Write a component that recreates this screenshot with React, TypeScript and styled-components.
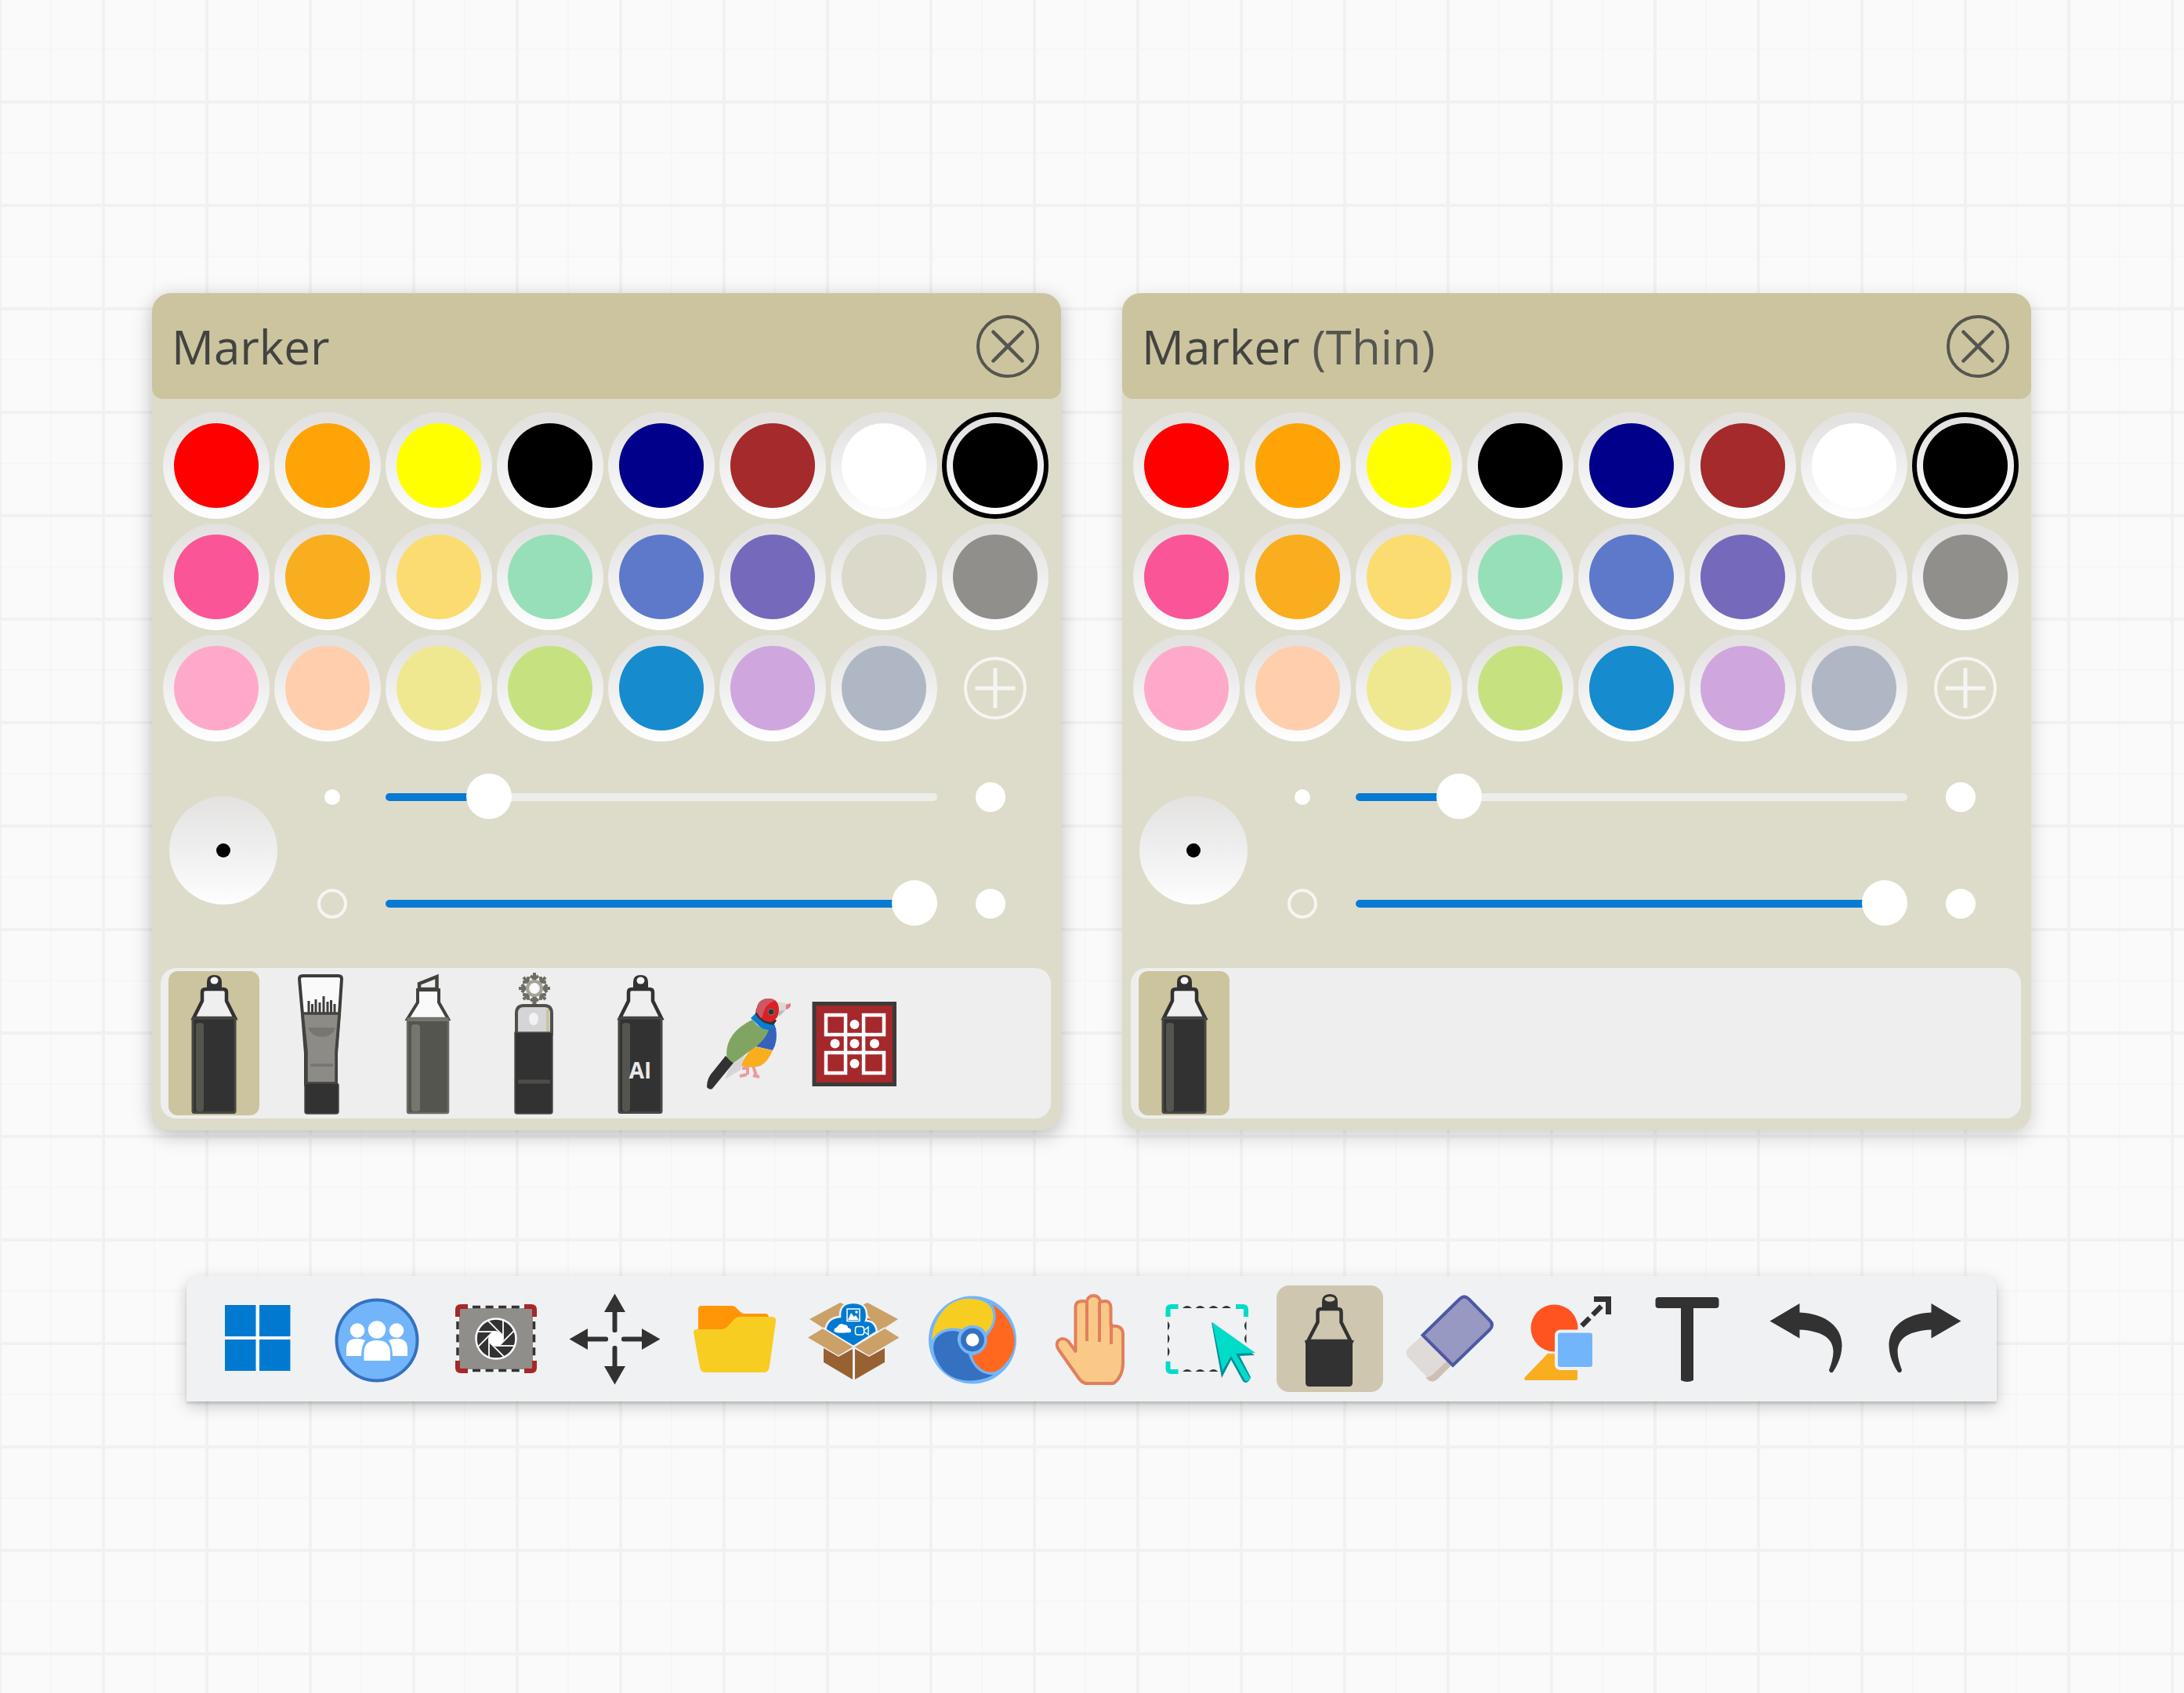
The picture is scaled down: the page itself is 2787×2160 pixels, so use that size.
import React, { useId, useState } from "react";
import styled, { createGlobalStyle } from "styled-components";

const ink = "#323232";
const sand = "#cbc49f";

const GlobalStyle = createGlobalStyle`
  * { box-sizing: border-box; }
  body {
    margin: 0;
    background-color: #fafafa;
    font-family: "Open Sans", "Noto Sans", sans-serif;
  }
`;

const Board = styled.main`
  min-height: 100vh;
  display: flex;
  flex-direction: column;
  align-items: center;
  gap: 186px;
  padding: 374px 195px 80px 194px;
  background-color: #fafafa;
  background-image:
    linear-gradient(90deg, #f2f1f0 4px, transparent 4px),
    linear-gradient(#f1f1f1 4px, transparent 4px),
    linear-gradient(90deg, #f6f6f6 2px, transparent 2px),
    linear-gradient(#f6f6f6 2px, transparent 2px);
  background-size: 132px 132px;
  background-position: -2px 0, 0 -4px, 64px 0, 0 62px;
`;

const Panels = styled.div`
  align-self: stretch;
  display: flex;
  gap: 78px;
`;

const Panel = styled.section<{ $soft?: boolean }>`
  flex: 1;
  min-width: 0;
  border-radius: 24px;
  background: #dddcca;
  box-shadow: ${(p) =>
    p.$soft ? "0 8px 24px rgba(0, 0, 0, 0.17)" : "0 6px 24px rgba(0, 0, 0, 0.26)"};
`;

const PanelHeader = styled.header`
  height: 135px;
  padding: 0 28px 0 25px;
  display: flex;
  align-items: center;
  justify-content: space-between;
  border-radius: 24px 24px 14px 14px;
  background: ${sand};
`;

const PanelTitle = styled.h2`
  margin: 0;
  font-size: 60px;
  line-height: 80px;
  font-weight: 500;
  color: #434340;
`;

const Variant = styled.span`
  color: #555550;
`;

const RoundButton = styled.button`
  width: 80px;
  height: 80px;
  padding: 0;
  border: 0;
  background: none;
  svg { display: block; }
`;

const Palette = styled.div`
  display: grid;
  grid-template-columns: repeat(8, 136px);
  justify-content: space-between;
  align-items: center;
  justify-items: center;
  row-gap: 6px;
  padding: 17px 16px 0 14px;
`;

const Swatch = styled.input<{ $color: string }>`
  appearance: none;
  width: 136px;
  height: 136px;
  margin: 0;
  border: 14px solid transparent;
  border-radius: 50%;
  background:
    linear-gradient(${(p) => p.$color}, ${(p) => p.$color}) padding-box,
    linear-gradient(#e3e2e1 10%, #efefef 50%, #fdfdfd 95%) border-box;
  &:checked {
    outline: 6px solid #000;
    outline-offset: -6px;
  }
`;

const StrokeSettings = styled.div`
  display: flex;
  align-items: center;
  gap: 50px;
  padding: 3px 70px 0 22px;
`;

const Preview = styled.div`
  flex: none;
  width: 138px;
  height: 138px;
  display: grid;
  place-items: center;
  border-radius: 50%;
  background: linear-gradient(#e3e2e1, #efefef 50%, #fefefe);
`;

const PreviewDot = styled.span`
  width: 18px;
  height: 18px;
  border-radius: 50%;
  background: #000;
`;

const Sliders = styled.div`
  flex: 1;
  min-width: 0;
`;

const SliderRow = styled.div`
  height: 136px;
  display: grid;
  grid-template-columns: 40px 1fr 40px;
  column-gap: 48px;
  align-items: center;
  justify-items: center;
`;

const Dot = styled.span<{ $size: number; $hollow?: boolean }>`
  width: ${(p) => p.$size}px;
  height: ${(p) => p.$size}px;
  border-radius: 50%;
  border: 4px solid ${(p) => (p.$hollow ? "#f6f5f2" : "#fff")};
  background: ${(p) => (p.$hollow ? "transparent" : "#fff")};
`;

const Range = styled.input`
  appearance: none;
  width: 100%;
  height: 58px;
  margin: 0;
  background: none;
  &::-webkit-slider-runnable-track {
    height: 10px;
    border-radius: 5px;
    background: linear-gradient(90deg, #067bd4 var(--fill), #ededea var(--fill));
  }
  &::-webkit-slider-thumb {
    appearance: none;
    width: 58px;
    height: 58px;
    margin-top: -25px;
    border-radius: 50%;
    background: #fff;
  }
`;

const Tray = styled.div`
  height: 192px;
  margin: 14px 13px 0 11px;
  padding: 4px 10px;
  display: flex;
  gap: 20px;
  border-radius: 20px;
  background: #eeeeee;
`;

const PanelFoot = styled.div`
  height: 15px;
`;

const Pen = styled.button<{ $active?: boolean }>`
  width: 116px;
  height: 184px;
  padding: 0;
  border: 0;
  border-radius: 12px;
  background: ${(p) => (p.$active ? sand : "transparent")};
  svg { display: block; }
`;

const Toolbar = styled.nav`
  display: flex;
  gap: 16px;
  padding: 12px 23px;
  border-radius: 16px 16px 0 0;
  background: #eff1f3;
  box-shadow: 0 3px 3px rgba(0, 0, 0, 0.12), 0 6px 20px rgba(0, 0, 0, 0.2);
`;

const Tool = styled.button<{ $active?: boolean }>`
  width: 136px;
  height: 136px;
  padding: 0;
  border: 0;
  border-radius: 16px;
  background: ${(p) => (p.$active ? "#cfc6b0" : "transparent")};
  svg { display: block; }
`;

/* ---------- pens ---------- */

const PenArt = ({ children }: { children: React.ReactNode }) => (
  <svg width="116" height="184" viewBox="0 0 116 184" aria-hidden="true">{children}</svg>
);

const MarkerPen = ({ label }: { label?: string }) => (
  <PenArt>
    <path d="M43 38V27q0-4 4-4h23q4 0 4 4v11l11 22H32z" fill="#efefef" stroke={ink} strokeWidth="4.5" />
    <path d="M49 24v-10q0-9 9.5-9t9.5 9v10z" fill={ink} />
    <ellipse cx="58.500" cy="12" rx="5" ry="4.5" fill="#f4f4f4" />
    <rect x="31" y="60" width="54" height="120.5" rx="2" fill={ink} stroke="#474743" strokeWidth="3" />
    <rect x="35" y="66" width="10" height="113" rx="4" fill="#555550" />
    {label && (
      <text x="58" y="137" textAnchor="middle" fontSize="28" fontWeight="700" fontFamily='"Open Sans", sans-serif' fill="#e8e8e8">
        {label}
      </text>
    )}
  </PenArt>
);

const BrushPen = () => (
  <PenArt>
    <path d="M31 10q0-4 4-4h46q4 0 4 4l-3 45-4 50v40H39v-40l-4-50z" fill="#fafafa" stroke="#3c3c3a" strokeWidth="4" />
    <path d="M35 54h47l-4 48v41H40v-41z" fill="#8c8b86" stroke="#434340" strokeWidth="3.5" />
    <path d="M43 54V38M47.5 54V42M52 54V36M57 54V40M62 54V32M67 54V39M71.5 54V37M76 54V42" stroke="#3f3f3c" strokeWidth="3" />
    <path d="M42 72h35q-3 11-17 12-14-1-18-12z" fill="#777670" />
    <path d="M45 120h29" stroke="#777670" strokeWidth="4" />
    <rect x="38" y="143" width="43" height="39" rx="3" fill={ink} stroke="#4a4a47" strokeWidth="1.5" />
  </PenArt>
);

const HighlighterPen = () => (
  <PenArt>
    <path d="M46 40V24h27v16l12 21H33z" fill="#fafafa" stroke="#41413e" strokeWidth="4" />
    <path d="M48 23v-7L70.5 7v16z" fill="#efefef" stroke="#41413e" strokeWidth="4.5" />
    <rect x="33" y="60" width="52" height="121" rx="2" fill="#54554e" stroke="#6a6b64" strokeWidth="2.5" />
    <rect x="38" y="68" width="11" height="111" rx="4" fill="#75766e" />
    <path d="M34 62h50" stroke="#75766e" strokeWidth="4" />
  </PenArt>
);

const SprayPen = () => (
  <PenArt>
    <path d="M59 34v9" stroke="#a3a295" strokeWidth="6" />
    <g stroke="#6d6d65" strokeWidth="4" fill="none">
      {[0, 45, 90, 135, 180, 225, 270, 315].map((a) => (
        <path key={a} d="M59 14V2M54 6l5 4 5-4" transform={`rotate(${a} 59 22)`} />
      ))}
      <circle cx="59" cy="22" r="9" stroke="#a3a295" />
    </g>
    <ellipse cx="59" cy="22" rx="5" ry="6.5" fill="#fafafa" />
    <path d="M36 80V54q0-10 9-10h27q9 0 9 10v26z" fill="#d5d5d8" stroke="#50504b" strokeWidth="4" />
    <path d="M76 49v30" stroke={sand} strokeWidth="4" />
    <ellipse cx="58" cy="61" rx="6" ry="8" fill="#f2f2f2" />
    <path d="M34 78h48v101q0 3-3 3H37q-3 0-3-3z" fill={ink} stroke="#50504b" strokeWidth="1.5" />
    <path d="M38 141h41" stroke="#4d4d49" strokeWidth="5" />
  </PenArt>
);

const BirdStamp = () => (
  <PenArt>
    <path d="M38 117l18-12-6 21-20 12z" fill="#d6d6d9" />
    <path d="M31 108l10 9-27 33q-4 2-7-2 0-12 8-20z" fill={ink} />
    <path d="M52 124h7v8M66 121l4 12M49 134l9-2M66 133l8 2" stroke="#e89ca2" strokeWidth="4" fill="none" />
    <path d="M63 60l6-6 25 15 1 10-14-2z" fill="#0c7bd4" />
    <path d="M85 74l10-2q3 18-4 29l-22-5z" fill="#3562bb" />
    <path d="M67 96l24 5q-6 15-16 20-12 3-24 0 3-12 16-25z" fill="#f9ae20" />
    <path d="M65 62q10 13 21 13-4 12-16 21l-29 21q-8-4-9-11 0-28 33-44z" fill="#80a563" />
    <path d="M70 48l7 0 19 15-4 6q-16-2-23-14z" fill={ink} />
    <path d="M97 39l17 3q0 6-6 7l-9 9z" fill="#dcd9d2" />
    <path d="M108 43l6-2q1 6-6 8z" fill="#e4778a" />
    <path d="M99 58l8-8-8 1z" fill="#adbdcd" />
    <path d="M70 52q1-17 16-17 13 0 13 15 0 11-10 15-12 0-19-13z" fill="#dc1f26" />
    <path d="M70 52q1-17 16-17 5 0 8 3-13 3-16 20l-2 2z" fill="#cd5762" />
    <circle cx="89" cy="52" r="4" fill="#333" stroke="#777" />
  </PenArt>
);

const PatternStamp = () => (
  <PenArt>
    <rect x="8" y="41.5" width="102.500" height="103" fill="#a5282b" stroke="#3b3b39" strokeWidth="5" />
    <path d="M23 56h25v74H23v-26h74v26H71V56h26v25H23z" fill="none" stroke="#fff" strokeWidth="4.500" />
    <g fill="#fff">
      <circle cx="59.5" cy="68" r="6" />
      <circle cx="59.5" cy="92.5" r="6" />
      <circle cx="59.5" cy="118" r="6" />
      <circle cx="34.5" cy="92.5" r="6" />
      <circle cx="85" cy="92.5" r="6" />
    </g>
  </PenArt>
);

/* ---------- toolbar icons ---------- */

const Art = ({ children }: { children: React.ReactNode }) => (
  <svg width="136" height="136" viewBox="0 0 136 136" aria-hidden="true">{children}</svg>
);

const WindowsIcon = () => (
  <Art>
    <rect x="26" y="25" width="84" height="84" fill="#fbfbfb" />
    <path d="M26 25h39.500v40H26zM70 25h39.500v40H70zM26 69h39.500v40H26zM70 69h39.500v40H70z" fill="#007ad1" />
  </Art>
);

const PeopleIcon = () => (
  <Art>
    <circle cx="68" cy="70" r="51.5" fill="#73b5fb" stroke="#3571c0" strokeWidth="4" />
    <g fill="#fff">
      <circle cx="43" cy="57.5" r="9.3" />
      <circle cx="93" cy="57.5" r="9.3" />
      <circle cx="68" cy="56.5" r="11.2" />
      <path d="M29 90V81q0-13 13-13 7 0 11 2-5 8-5 20z" />
      <path d="M107 90V81q0-13-13-13-7 0-11 2 5 8 5 20z" />
      <path d="M51.5 96V86q0-16 16.5-16t17 16v10z" />
    </g>
  </Art>
);

const CaptureIcon = () => (
  <Art>
    <rect x="21" y="29" width="94" height="78" fill="#8f8e8a" />
    <g stroke={ink} strokeWidth="3.5" fill="none">
      <path d="M38 27.5h62M38 108.5h62" strokeDasharray="10 6.6" />
      <path d="M19 46v44M116.5 46v44" strokeDasharray="10 6.6" />
    </g>
    <path
      d="M19 40v-9q0-4 4-4h9M104 27h9q4 0 4 4v9M117 96v9q0 4-4 4h-9M32 109h-9q-4 0-4-4v-9"
      fill="none" stroke="#a5282b" strokeWidth="6"
    />
    <circle cx="68" cy="68" r="25.5" fill={ink} stroke="#fff" strokeWidth="2.5" />
    <circle cx="68" cy="68" r="9.8" fill="#fff" />
    <g stroke="#fff" strokeWidth="1.8">
      {[0, 45, 90, 135, 180, 225, 270, 315].map((a) => (
        <path key={a} d="M45 59h24" transform={`rotate(${a} 68 68)`} />
      ))}
    </g>
  </Art>
);

const MoveIcon = () => (
  <Art>
    {[0, 90, 180, 270].map((a) => (
      <g key={a} transform={`rotate(${a} 67.5 68.5)`} fill={ink}>
        <path d="M67.500 10.500l13.500 23.500h-27z" />
        <rect x="64.5" y="30" width="6" height="30" rx="2.5" />
      </g>
    ))}
  </Art>
);

const FolderIcon = () => (
  <Art>
    <path d="M22 58V30q0-4 4-4h39q3 0 6 3l5 5q2 2 5 2h26q5 0 5 5v17z" fill="#ff9608" />
    <path d="M16 60q0-4 4-4h30q6 0 10-4l7-8q4-4 9-4h40q6 0 5 6l-8 57q-1 8-7 8H31q-6 0-7-7z" fill="#f7cd22" />
  </Art>
);

const BoxIcon = () => (
  <Art>
    <path d="M84 40l24 15-8 5-16-10z" fill="#976131" />
    <path d="M12 43l39-21 7 3-20 34-9-5zM125 43L86 22l-7 3 20 34 9-5z" fill="#cba168" />
    <path
      d="M68 78L32 58q2-17 19-18-1-18 17-18t17 18q0 3-1 5 12 0 14 14z"
      fill="#007ad1" stroke="#eff1f3" strokeWidth="2.5"
    />
    <g fill="none" stroke="#fff" strokeWidth="1.5">
      <rect x="60" y="30" width="16" height="15.5" />
      <rect x="70.5" y="52.5" width="11" height="10.5" rx="3" />
      <path d="M82 57l5-4v10l-5-4" />
    </g>
    <path d="M61 44l4-9 4 5 2-2 4 6z" fill="#fff" />
    <circle cx="72" cy="34" r="1.8" fill="#fff" />
    <path d="M46 60q-4-1-2-5 3-1 4-3 3-5 8-2 5 0 5 4 5 1 4 5-2 2-5 1-6 1-14 0z" fill="#fff" />
    <path d="M30 80l19 11 18-10v39L30 98zM108 80L88 91 70 81v39l38-22z" fill="#976131" />
    <path d="M10 66.500L29 55l39 23-19 11.500zM126.500 66.500L108 55 69 78l19 11.500z" fill="#cba168" />
    <path d="M29 54l39.500 24L108 54" fill="none" stroke="#eff1f3" strokeWidth="2" />
  </Art>
);

const SwirlIcon = () => {
  const blade =
    "M16 69C18 42 36 17 62 17C84 17 95 25 94.500 41C94 50 89 57 85 60Q80 51 68 51Q60 51 55 56Q28 50 16 70z";
  return (
    <Art>
      <circle cx="68" cy="69.5" r="56" fill="#73b5fb" />
      <path d={blade} fill="#f7cd22" />
      <path d={blade} fill="#ff681e" transform="rotate(120 68 69.5)" />
      <path d={blade} fill="#3571c0" transform="rotate(240 68 69.5)" />
      <circle cx="68" cy="69.5" r="18.5" fill="#73b5fb" />
      <circle cx="68" cy="69.5" r="15" fill="#3571c0" />
      <circle cx="68" cy="69.5" r="8.3" fill="#fff" />
    </Art>
  );
};

const HandIcon = () => (
  <Art>
    <path
      d="M47.500 84V28q0-8 8-8 4 0 6 1 2-8 9-8t9 8q12-4 13 7v24q15-2 15.500 10v37q0 17-12 26H60q-4-1-8-6L26 82q-4-6-1-11 6-6 13 0z"
      fill="#fac988" stroke="#e27f5d" strokeWidth="4" strokeLinejoin="round"
    />
    <path d="M62 21v50M78 21v51M93 48v27" stroke="#e27f5d" strokeWidth="4" />
  </Art>
);

const SelectIcon = () => (
  <Art>
    <path
      d="M13.500 40V31q0-4 4-4h9M100 27h9q4 0 4 4v9M26.500 110h-9q-4 0-4-4v-9"
      fill="none" stroke="#00dcc8" strokeWidth="6"
    />
    <g fill={ink}>
      {[38, 54.5, 71.5, 88].map((x) => (
        <path key={x} d={`M${x - 6} 29q6-6 12 0z`} />
      ))}
      {[38, 54.5, 71.5].map((x) => (
        <path key={x} d={`M${x - 6} 110q6-6 12 0z`} />
      ))}
      {[51.5, 68, 84.5].map((y) => (
        <path key={y} d={`M13 ${y - 6}q5 6 0 12z`} />
      ))}
      {[51.5, 68].map((y) => (
        <path key={y} d={`M113.500 ${y - 6}q-5 6 0 12z`} />
      ))}
    </g>
    <path d="M69 47l13 71 12-23 15 27q4 5 9-2l1-3-14-27 19-1z" fill="#008f9d" />
    <path d="M70 47l13 62 11-19 18 32q6 0 6-4l-18-31 25-1z" fill="#00dcc8" />
  </Art>
);

const PenIcon = () => (
  <Art>
    <path d="M52.500 47V34q0-4 4-4h22q4 0 4 4v13l12 24H40z" fill="none" stroke={ink} strokeWidth="4.5" />
    <path d="M58 32V21q0-10 10-10t10 10v11z" fill={ink} />
    <ellipse cx="68" cy="17.5" rx="6.5" ry="3.3" fill="#cfc6b0" />
    <path d="M36 70h63l-2 4v50q0 5-5 5H42q-5 0-5-5V74z" fill={ink} />
  </Art>
);

const EraserIcon = () => (
  <Art>
    <path d="M34 64L16 80q-5 5 0 12l24 25q7 5 14-1l17-16z" fill="#e0dad9" />
    <path d="M38 117q5 1 9-3l20-19 5 6-18 18q-8 8-16-2z" fill="#cdbfb6" />
    <path d="M34.500 63.500l47-46q6-6 12 0l26.500 27q6 6 0 12L73 102z" fill="#9799c2" stroke="#4d58a5" strokeWidth="4" />
  </Art>
);

const ShapesIcon = () => (
  <Art>
    <circle cx="50.5" cy="54.5" r="30" fill="#ff5320" />
    <path d="M42 87h38v32q0 2-2 2H14q-3-1-1-4z" fill="#f9ae20" />
    <rect x="53" y="58.5" width="48" height="47.5" rx="5" fill="#73b5fb" stroke="#eff1f3" strokeWidth="4" />
    <path d="M85.500 51.500l10-10M99.500 37.500l11-11" stroke={ink} strokeWidth="6.5" />
    <path d="M101 17.500h18.500V37" fill="none" stroke={ink} strokeWidth="7" />
  </Art>
);

const TextIcon = () => (
  <Art>
    <rect x="27.5" y="15" width="81" height="14" rx="4" fill={ink} />
    <path d="M60 24h16v97q-8 4-16 0z" fill={ink} />
  </Art>
);

const undoPath =
  "M21.500 45.500L59.500 23v11.500C94 36 114 54 113.500 77C113 92 107 103 102 110.500Q98.500 113 97 108C100 100 102.500 92 102.500 84C102 66 86 58 59.500 56.500v11z";

const UndoIcon = () => (
  <Art>
    <path d={undoPath} fill={ink} />
  </Art>
);

const RedoIcon = () => (
  <Art>
    <path d={undoPath} fill={ink} transform="translate(135 0) scale(-1 1)" />
  </Art>
);

/* ---------- data ---------- */

const colors: [string, string][] = [
  ["Red", "#ff0000"], ["Orange", "#ffa406"], ["Yellow", "#ffff00"], ["Black", "#000000"],
  ["Navy", "#00008b"], ["Brown", "#a42a2b"], ["White", "#ffffff"], ["Current black", "#000000"],
  ["Pink", "#fa5597"], ["Amber", "#f9ae20"], ["Sand", "#fbdc70"], ["Mint", "#96dfb9"],
  ["Cornflower", "#5e78ca"], ["Violet", "#7469bb"], ["Stone", "#dad9ca"], ["Gray", "#918f8b"],
  ["Light pink", "#ffa9ca"], ["Peach", "#ffceac"], ["Straw", "#f0e890"], ["Lime", "#c6e280"],
  ["Sky blue", "#168bce"], ["Lilac", "#cfa7de"], ["Silver blue", "#b0b7c4"],
];

const pens: [string, React.ReactNode][] = [
  ["Marker", <MarkerPen />],
  ["Brush", <BrushPen />],
  ["Highlighter", <HighlighterPen />],
  ["Glitter pen", <SprayPen />],
  ["AI pen", <MarkerPen label="AI" />],
  ["Bird stamp", <BirdStamp />],
  ["Pattern stamp", <PatternStamp />],
];

const tools: [string, React.ReactNode][] = [
  ["Start", <WindowsIcon />], ["People", <PeopleIcon />], ["Capture", <CaptureIcon />],
  ["Move", <MoveIcon />], ["Open", <FolderIcon />], ["Resources", <BoxIcon />],
  ["Browser", <SwirlIcon />], ["Pan", <HandIcon />], ["Select", <SelectIcon />],
  ["Pen", <PenIcon />], ["Eraser", <EraserIcon />], ["Shapes", <ShapesIcon />],
  ["Text", <TextIcon />], ["Undo", <UndoIcon />], ["Redo", <RedoIcon />],
];

const THUMB = 58;

function Slider({ label, initial }: { label: string; initial: number }) {
  const [value, setValue] = useState(initial);
  // The filled part stops at the left edge of the thumb.
  const fill = `calc((100% - ${THUMB}px) * ${value / 100} + 4px)`;
  return (
    <Range
      type="range"
      aria-label={label}
      value={value}
      onChange={(e) => setValue(Number(e.target.value))}
      style={{ "--fill": fill } as React.CSSProperties}
    />
  );
}

function PenPanel({ variant, penCount }: { variant?: string; penCount: number }) {
  const group = useId();
  return (
    <Panel $soft={Boolean(variant)}>
      <PanelHeader>
        <PanelTitle>
          Marker{variant && <Variant> {variant}</Variant>}
        </PanelTitle>
        <RoundButton type="button" aria-label="Close">
          <svg width="80" height="80" viewBox="0 0 80 80" fill="none" stroke="#555550" strokeLinecap="round">
            <circle cx="40" cy="40" r="38" strokeWidth="4" />
            <path d="M21.500 21.500l37 37M58.500 21.500l-37 37" strokeWidth="4.5" />
          </svg>
        </RoundButton>
      </PanelHeader>
      <Palette>
        {colors.map(([name, color]) => (
          <Swatch
            key={name}
            type="radio"
            name={group}
            aria-label={name}
            $color={color}
            defaultChecked={name === "Current black"}
          />
        ))}
        <RoundButton type="button" aria-label="Add color">
          <svg width="80" height="80" viewBox="0 0 80 80" fill="none" stroke="#f6f5f2">
            <circle cx="40" cy="40" r="38" strokeWidth="4" />
            <path d="M14.500 40h51M40 14.500v51" strokeWidth="5" />
          </svg>
        </RoundButton>
      </Palette>
      <StrokeSettings>
        <Preview>
          <PreviewDot />
        </Preview>
        <Sliders>
          <SliderRow>
            <Dot $size={20} />
            <Slider label="Thickness" initial={16} />
            <Dot $size={38} />
          </SliderRow>
          <SliderRow>
            <Dot $size={38} $hollow />
            <Slider label="Opacity" initial={100} />
            <Dot $size={38} />
          </SliderRow>
        </Sliders>
      </StrokeSettings>
      <Tray>
        {pens.slice(0, penCount).map(([name, art], i) => (
          <Pen key={name} type="button" aria-label={name} aria-pressed={i === 0} $active={i === 0}>
            {art}
          </Pen>
        ))}
      </Tray>
      <PanelFoot />
    </Panel>
  );
}

export default function App() {
  return (
    <>
      <GlobalStyle />
      <Board>
        <Panels>
          <PenPanel penCount={7} />
          <PenPanel variant="(Thin)" penCount={1} />
        </Panels>
        <Toolbar aria-label="Tools">
          {tools.map(([name, art]) => (
            <Tool key={name} type="button" aria-label={name} aria-pressed={name === "Pen"} $active={name === "Pen"}>
              {art}
            </Tool>
          ))}
        </Toolbar>
      </Board>
    </>
  );
}
